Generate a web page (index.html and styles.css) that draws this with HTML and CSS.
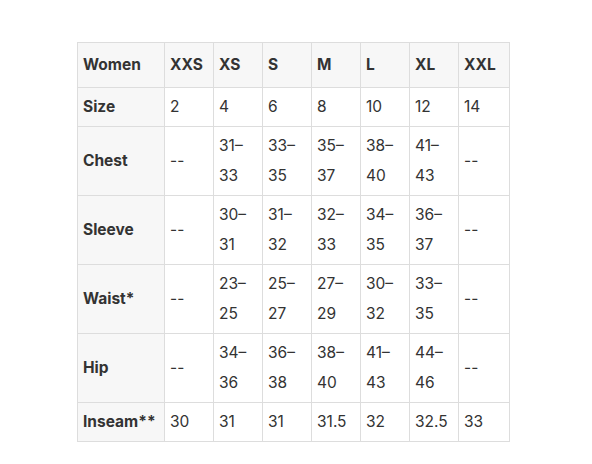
FILE: index.html
```html
<!DOCTYPE html>
<html>
<head>
<meta charset="utf-8">
<link rel="stylesheet" href="styles.css">
</head>
<body>
<div class="page">
<table class="sizes">
<colgroup>
<col class="c-first"><col class="c"><col class="c"><col class="c"><col class="c"><col class="c"><col class="c"><col class="c-last">
</colgroup>
<thead>
<tr><th>Women</th><th>XXS</th><th>XS</th><th>S</th><th>M</th><th>L</th><th>XL</th><th>XXL</th></tr>
</thead>
<tbody>
<tr><th>Size</th><td>2</td><td>4</td><td>6</td><td>8</td><td>10</td><td>12</td><td>14</td></tr>
<tr><th>Chest</th><td>--</td><td>31–33</td><td>33–35</td><td>35–37</td><td>38–40</td><td>41–43</td><td>--</td></tr>
<tr><th>Sleeve</th><td>--</td><td>30–31</td><td>31–32</td><td>32–33</td><td>34–35</td><td>36–37</td><td>--</td></tr>
<tr><th>Waist*</th><td>--</td><td>23–25</td><td>25–27</td><td>27–29</td><td>30–32</td><td>33–35</td><td>--</td></tr>
<tr><th>Hip</th><td>--</td><td>34–36</td><td>36–38</td><td>38–40</td><td>41–43</td><td>44–46</td><td>--</td></tr>
<tr><th>Inseam**</th><td>30</td><td>31</td><td>31</td><td>31.5</td><td>32</td><td>32.5</td><td>33</td></tr>
</tbody>
</table>
</div>
</body>
</html>
```
FILE: styles.css
```css
html, body { margin: 0; padding: 0; background: #fff; }
.page { padding: 42px 0 0 77px; }
.sizes {
  border-collapse: collapse;
  table-layout: fixed;
  width: 433px;
  font-family: Inter, "Liberation Sans", sans-serif;
  font-size: 15.5px;
  line-height: 30px;
  color: #333;
}
.c-first { width: 87px; }
.c { width: 49px; }
.c-last { width: 51px; }
.sizes th, .sizes td {
  border: 1px solid #ddd;
  padding: 4px 5px;
  text-align: left;
  vertical-align: middle;
}
.sizes th { background: #f7f7f7; font-weight: 700; }
.sizes thead th { padding: 7px 5px; }
.sizes td { font-weight: 400; }
```
